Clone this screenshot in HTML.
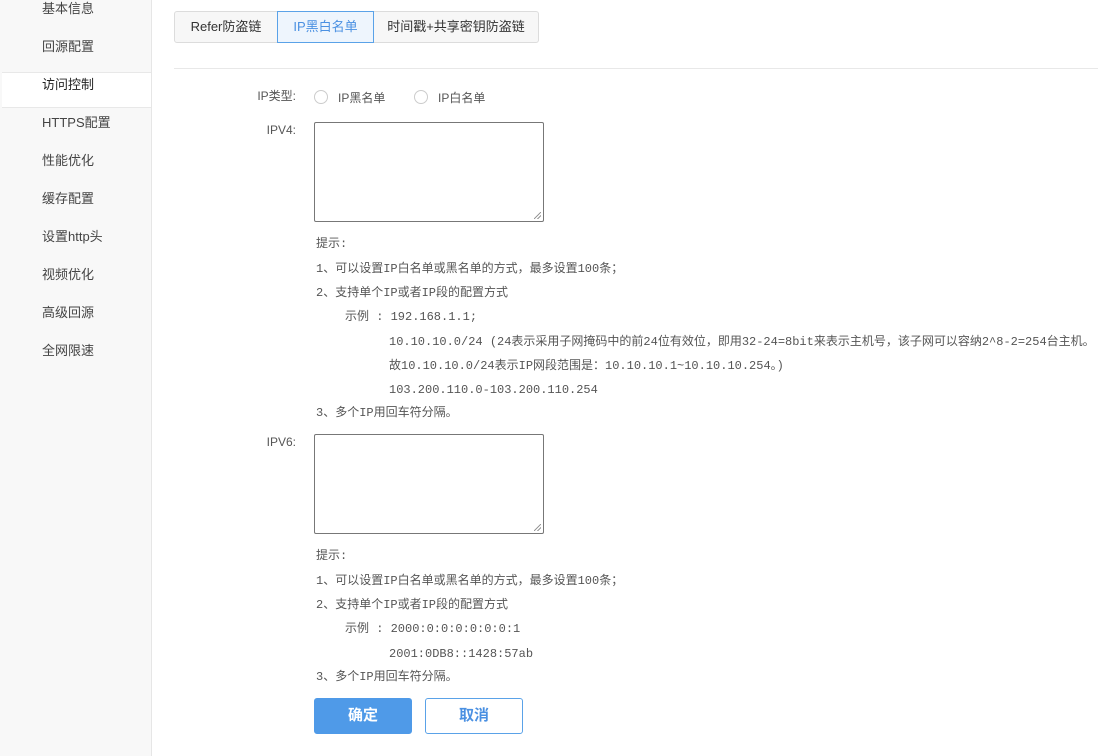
<!DOCTYPE html>
<html><head><meta charset="utf-8"><style>
*{margin:0;padding:0;box-sizing:border-box}
body{width:1098px;height:756px;position:relative;background:#fff;font-family:"Liberation Sans","Noto Sans CJK SC",sans-serif;overflow:hidden;color:#333}
.side{position:absolute;left:0;top:0;width:152px;height:756px;background:#f8f8f8;border-right:1px solid #e6e6e6}
.si{position:absolute;left:42px;font-size:13px;color:#444;line-height:18px}
.act{position:absolute;left:2px;top:72px;width:149px;height:36px;background:#fff;border-top:1px solid #e8e8e8;border-bottom:1px solid #e8e8e8}
.tab{position:absolute;top:11px;height:32px;border:1px solid #dcdcdc;background:#f7f7f7;font-size:13px;line-height:30px;text-align:center;color:#333}
.ab{position:absolute}
.lbl{position:absolute;font-size:12px;color:#555;text-align:right;width:60px;left:236px}
.radio{position:absolute;width:14px;height:14px;border:1px solid #ccc;border-radius:50%;top:90px}
.rt{position:absolute;top:89px;font-size:12px;color:#555}
.ta{position:absolute;left:314px;width:230px;height:100px;border:1px solid #777;border-radius:2px}
.ta:after{content:"";position:absolute;right:2px;bottom:2px;width:7px;height:7px;background:linear-gradient(135deg,transparent 45%,#999 46%,#999 54%,transparent 55%,transparent 70%,#999 71%,#999 79%,transparent 80%)}
.h{position:absolute;font-family:"Liberation Mono","Noto Sans CJK SC",monospace;font-size:12px;color:#555;white-space:nowrap;line-height:14px}
.btn{position:absolute;top:698px;width:98px;height:36px;border-radius:3px;font-size:15px;font-weight:bold;text-align:center;line-height:34px}
</style></head><body>
<div class="side">
<div class="act"></div>
<div class="si" style="top:0">基本信息</div>
<div class="si" style="top:38px">回源配置</div>
<div class="si" style="top:76px;color:#222">访问控制</div>
<div class="si" style="top:114px">HTTPS配置</div>
<div class="si" style="top:152px">性能优化</div>
<div class="si" style="top:190px">缓存配置</div>
<div class="si" style="top:228px">设置http头</div>
<div class="si" style="top:266px">视频优化</div>
<div class="si" style="top:304px">高级回源</div>
<div class="si" style="top:342px">全网限速</div>
</div>
<div class="tab" style="left:174px;width:104px;border-radius:3px 0 0 3px">Refer防盗链</div>
<div class="tab" style="left:373px;width:166px;border-radius:0 3px 3px 0">时间戳+共享密钥防盗链</div>
<div class="tab" style="left:277px;width:97px;border-color:#5aa2e8;background:#eef5fd;color:#4a90e2">IP黑白名单</div>
<div class="ab" style="left:174px;top:68px;width:924px;height:1px;background:#e8e8e8"></div>
<div class="lbl" style="top:87px">IP类型:</div>
<div class="radio" style="left:314px"></div><div class="rt" style="left:338px">IP黑名单</div>
<div class="radio" style="left:414px"></div><div class="rt" style="left:438px">IP白名单</div>
<div class="lbl" style="top:123px">IPV4:</div>
<div class="ta" style="top:122px"></div>
<div class="h" style="left:316px;top:237px">提示:</div>
<div class="h" style="left:316px;top:262px">1、可以设置IP白名单或黑名单的方式，最多设置100条；</div>
<div class="h" style="left:316px;top:286px">2、支持单个IP或者IP段的配置方式</div>
<div class="h" style="left:345px;top:310px">示例 : 192.168.1.1;</div>
<div class="h" style="left:389px;top:335px">10.10.10.0/24 (24表示采用子网掩码中的前24位有效位，即用32-24=8bit来表示主机号，该子网可以容纳2^8-2=254台主机。</div>
<div class="h" style="left:389px;top:359px">故10.10.10.0/24表示IP网段范围是：10.10.10.1~10.10.10.254。)</div>
<div class="h" style="left:389px;top:383px">103.200.110.0-103.200.110.254</div>
<div class="h" style="left:316px;top:406px">3、多个IP用回车符分隔。</div>
<div class="lbl" style="top:435px">IPV6:</div>
<div class="ta" style="top:434px"></div>
<div class="h" style="left:316px;top:549px">提示:</div>
<div class="h" style="left:316px;top:574px">1、可以设置IP白名单或黑名单的方式，最多设置100条；</div>
<div class="h" style="left:316px;top:598px">2、支持单个IP或者IP段的配置方式</div>
<div class="h" style="left:345px;top:622px">示例 : 2000:0:0:0:0:0:0:1</div>
<div class="h" style="left:389px;top:647px">2001:0DB8::1428:57ab</div>
<div class="h" style="left:316px;top:670px">3、多个IP用回车符分隔。</div>
<div class="btn" style="left:314px;background:#4f9ae8;color:#fff;border:1px solid #4f9ae8">确定</div>
<div class="btn" style="left:425px;background:#fff;color:#4a90e2;border:1px solid #5aa2e8">取消</div>
</body></html>
